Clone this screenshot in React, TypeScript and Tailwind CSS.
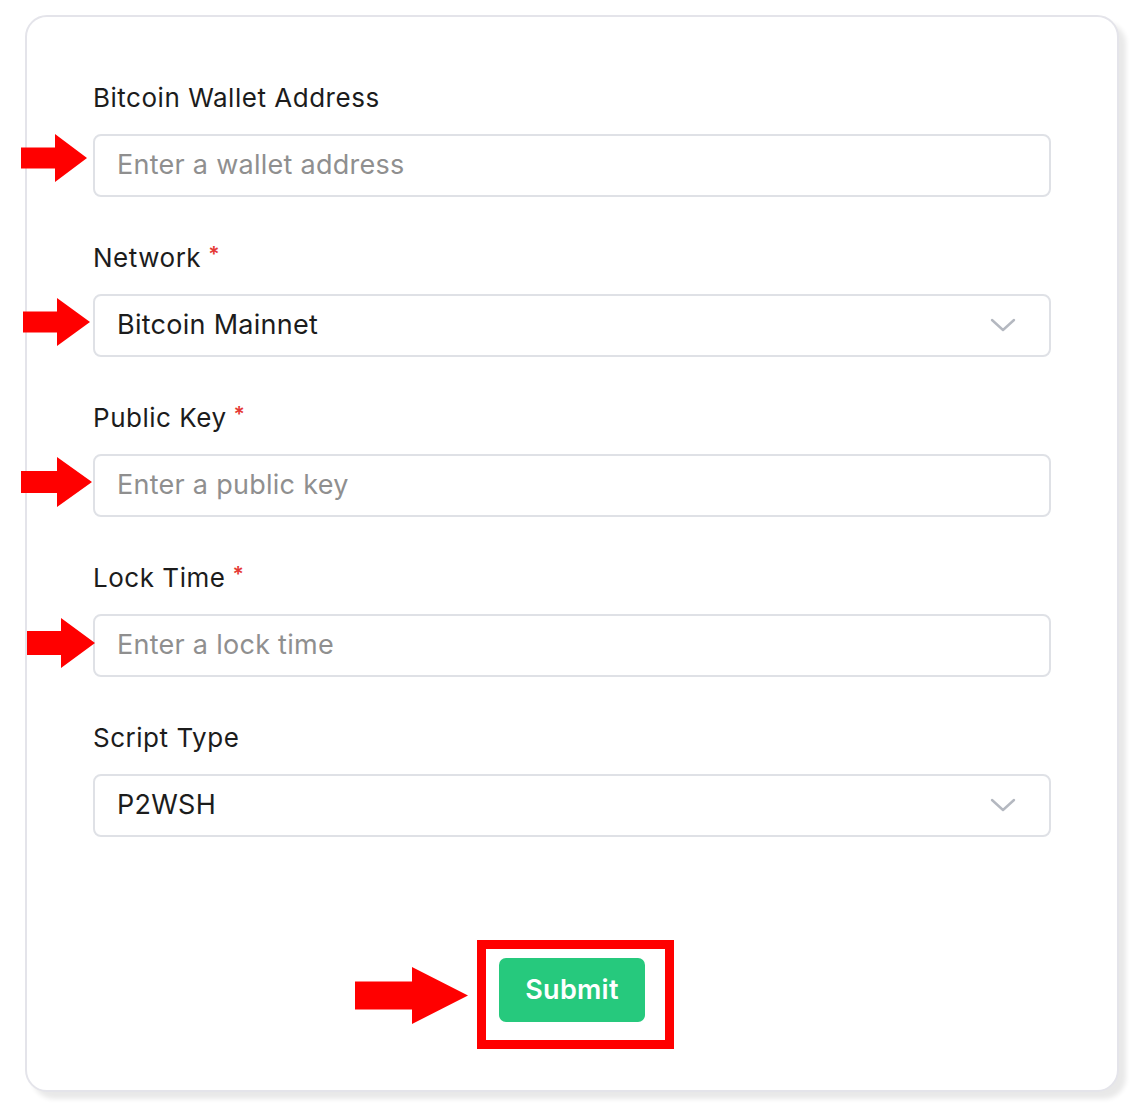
import React from 'react';

interface Field {
  label: string;
  required?: boolean;
  kind: 'input' | 'select';
  value: string;
}

const fields: Field[] = [
  { label: 'Bitcoin Wallet Address', kind: 'input', value: 'Enter a wallet address' },
  { label: 'Network', required: true, kind: 'select', value: 'Bitcoin Mainnet' },
  { label: 'Public Key', required: true, kind: 'input', value: 'Enter a public key' },
  { label: 'Lock Time', required: true, kind: 'input', value: 'Enter a lock time' },
  { label: 'Script Type', kind: 'select', value: 'P2WSH' },
];

// annotation arrows: left, top, shaft length, head length, height, shaft height
const arrows = [
  { left: 21, top: 134, shaft: 34, head: 32, h: 48, sh: 21 },
  { left: 23, top: 298, shaft: 34, head: 33, h: 48, sh: 21 },
  { left: 21, top: 457, shaft: 36, head: 35, h: 50, sh: 22 },
  { left: 27, top: 618, shaft: 34, head: 34, h: 50, sh: 24 },
  { left: 355, top: 967, shaft: 57, head: 56, h: 57, sh: 28 },
];

function Arrow({ left, top, shaft, head, h, sh }: (typeof arrows)[number]) {
  const w = shaft + head;
  const y0 = (h - sh) / 2;
  return (
    <svg
      className="absolute"
      style={{ left, top }}
      width={w}
      height={h}
      viewBox={`0 0 ${w} ${h}`}
    >
      <polygon
        fill="#ff0000"
        points={`0,${y0} ${shaft},${y0} ${shaft},0 ${w},${h / 2} ${shaft},${h} ${shaft},${y0 + sh} 0,${y0 + sh}`}
      />
    </svg>
  );
}

function Chevron() {
  return (
    <svg width="26" height="14" viewBox="0 0 26 14" className="-mt-[2px] text-[#b4b8c0]">
      <path d="M2 2l11 10L24 2" fill="none" stroke="currentColor" strokeWidth="2.4" strokeLinecap="round" strokeLinejoin="round" />
    </svg>
  );
}

export default function App() {
  return (
    <div
      className="relative min-h-[1111px] w-[1141px] bg-white pl-[25px] pt-[15px]"
      style={{ fontFamily: 'Inter, "Open Sans", sans-serif' }}
    >
      <div className="flex h-[1077px] w-[1094px] flex-col rounded-[22px] border-2 border-[#e4e4ea] bg-white pl-[66px] pt-[63px] shadow-[7px_7px_5px_rgba(0,0,0,0.09)]">
        {fields.map((f) => (
          <div key={f.label} className="mb-[43px] flex flex-col">
            <label className="flex h-[36px] items-center text-[26px] leading-none tracking-[0.02em] text-[#1c1c1c]">
              {f.label}
              {f.required && (
                <span className="ml-[7px] -mt-[8px] text-[21px] font-semibold text-[#e53935]">*</span>
              )}
            </label>
            <div className="mt-[18px] flex h-[63px] w-[958px] items-center justify-between rounded-[8px] border-2 border-[#dfe1e6] bg-white pl-[22px] pr-[33px]">
              {f.kind === 'input' ? (
                <input
                  placeholder={f.value}
                  className="w-full bg-transparent text-[27px] tracking-[0.01em] text-[#1c1c1c] outline-none placeholder:text-[#8f8f8f]"
                />
              ) : (
                <>
                  <span className="text-[27px] tracking-[0.01em] text-[#1c1c1c]">{f.value}</span>
                  <Chevron />
                </>
              )}
            </div>
          </div>
        ))}

        <div className="mt-[78px] flex justify-center pr-[66px]">
          <button className="flex h-[64px] w-[146px] items-center justify-center rounded-[7px] bg-[#26c97d] text-[27px] font-semibold tracking-[0.01em] text-white">
            Submit
          </button>
        </div>
      </div>

      {/* annotations */}
      <div className="absolute left-[477px] top-[940px] h-[109px] w-[197px] border-[9px] border-[#ff0000]" />
      {arrows.map((a, i) => (
        <Arrow key={i} {...a} />
      ))}
    </div>
  );
}
